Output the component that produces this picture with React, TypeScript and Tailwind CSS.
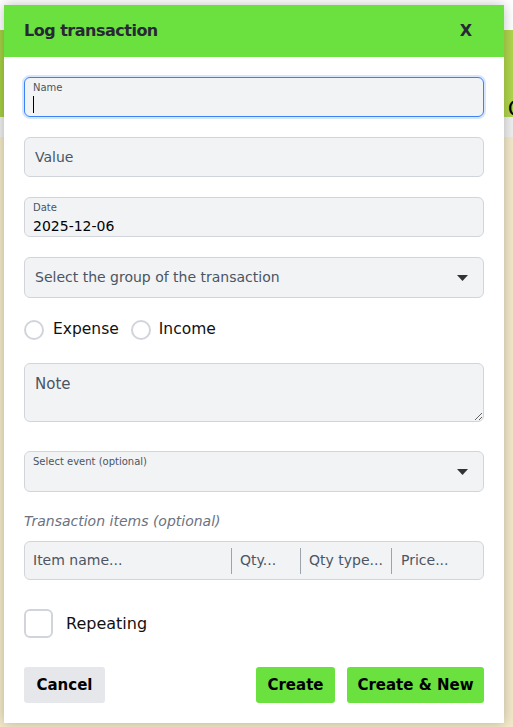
import { useState } from 'react';

const font = { fontFamily: '"DejaVu Sans", "Open Sans", sans-serif' };

const Caret = () => (
  <svg width="11" height="6" viewBox="0 0 11 6" className="shrink-0">
    <path d="M0 0 H11 L5.5 6 Z" fill="#333333" />
  </svg>
);

const App = () => {
  const [kind, setKind] = useState<'expense' | 'income' | null>(null);
  const [repeating, setRepeating] = useState(false);

  return (
    <div className="relative h-[727px] w-[513px] overflow-hidden bg-[#f4e9c9]" style={font}>
      {/* page behind the modal */}
      <div className="flex h-full flex-col">
        <div className="h-[30px] bg-white" />
        <div className="flex h-[87px] items-end justify-end bg-gradient-to-r from-[#a6cf45] to-[#b0d64c]">
          <span className="mb-[-4px] mr-[-10px] text-[22px] leading-[24px] text-black">C</span>
        </div>
        <div className="h-[20px] bg-[#efefef]" />
        <div className="flex-1 bg-[#f4e9c9]" />
      </div>

      {/* modal */}
      <div className="absolute left-[4px] top-[5px] w-[500px] bg-white shadow-[0_0_12px_rgba(0,0,0,0.25)]">
        <div className="flex h-[52px] items-center justify-between bg-[#6be13f] pl-5 pr-[32px]">
          <h2 className="text-[16px] font-bold tracking-[-0.5px] text-[#272735]">Log transaction</h2>
          <button className="text-[16px] font-bold text-[#272735]">X</button>
        </div>

        <div className="flex flex-col px-5 pb-5 pt-5">
          <div className="relative h-[40px] rounded-md border border-[#3b82f6] bg-[#f2f3f5] shadow-[0_0_0_2px_rgba(59,130,246,0.2)]">
            <span className="absolute left-[8px] top-[2px] text-[10px] text-[#4b5563]">Name</span>
            <span className="absolute left-[8px] top-[18px] h-[17px] w-px bg-black" />
          </div>

          <div className="mt-5 flex h-[40px] items-center rounded-md border border-[#d1d5db] bg-[#f2f3f5] px-[10px] text-[14px] text-[#4b5563]">
            Value
          </div>

          <div className="relative mt-5 h-[40px] rounded-md border border-[#d1d5db] bg-[#f2f3f5]">
            <span className="absolute left-[8px] top-[2px] text-[10px] text-[#4b5563]">Date</span>
            <span className="absolute left-[8px] top-[18px] text-[14px] text-black">2025-12-06</span>
          </div>

          <div className="mt-5 flex h-[41px] items-center justify-between rounded-md border border-[#d1d5db] bg-[#f2f3f5] pl-[10px] pr-[15px] text-[14px] text-[#4b5563]">
            <span>Select the group of the transaction</span>
            <Caret />
          </div>

          <div className="mt-[22px] flex h-[20px] items-center text-[15.5px] text-[#111111]">
            <button onClick={() => setKind('expense')} className="flex items-center">
              <span className="h-[20px] w-[20px] rounded-full border-2 border-[#d1d5db]">
                {kind === 'expense' && <span className="m-[3px] block h-[10px] w-[10px] rounded-full bg-[#6be13f]" />}
              </span>
              <span className="ml-[9px]">Expense</span>
            </button>
            <button onClick={() => setKind('income')} className="ml-[12px] flex items-center">
              <span className="h-[20px] w-[20px] rounded-full border-2 border-[#d1d5db]">
                {kind === 'income' && <span className="m-[3px] block h-[10px] w-[10px] rounded-full bg-[#6be13f]" />}
              </span>
              <span className="ml-[8px]">Income</span>
            </button>
          </div>

          <textarea
            placeholder="Note"
            className="mt-[23px] h-[59px] resize-y rounded-md border border-[#d1d5db] bg-[#f2f3f5] px-[10px] py-[9px] text-[15px] text-black outline-none placeholder:text-[#4b5563]"
          />

          <div className="relative mt-[29px] flex h-[41px] items-center justify-end rounded-md border border-[#d1d5db] bg-[#f2f3f5] pr-[15px]">
            <span className="absolute left-[8px] top-[2px] text-[10px] text-[#4b5563]">Select event (optional)</span>
            <Caret />
          </div>

          <p className="mt-[19px] h-[20px] text-[14px] italic leading-[20px] text-[#6b7280]">Transaction items (optional)</p>

          <div className="mt-[10px] flex h-[39px] items-center rounded-md border border-[#d1d5db] bg-[#f2f3f5] text-[14px] text-[#4b5563]">
            <span className="w-[206px] pl-[8px]">Item name...</span>
            <span className="h-[26px] w-px bg-[#9ca3af]" />
            <span className="w-[68px] pl-[8px]">Qty...</span>
            <span className="h-[26px] w-px bg-[#9ca3af]" />
            <span className="w-[90px] whitespace-nowrap pl-[8px]">Qty type...</span>
            <span className="h-[26px] w-px bg-[#9ca3af]" />
            <span className="flex-1 pl-[9px]">Price...</span>
          </div>

          <button onClick={() => setRepeating(!repeating)} className="mt-[29px] flex items-center text-[16px] text-[#111111]">
            <span className="flex h-[29px] w-[29px] items-center justify-center rounded-md border-2 border-[#d1d5db]">
              {repeating && <span className="h-[13px] w-[13px] rounded-sm bg-[#6be13f]" />}
            </span>
            <span className="ml-[13px]">Repeating</span>
          </button>

          <div className="mt-[29px] flex h-[36px] items-stretch">
            <button className="w-[81px] rounded-[3px] bg-[#e5e7eb] text-[15px] font-bold text-black">Cancel</button>
            <div className="flex-1" />
            <button className="w-[79px] rounded-[3px] bg-[#6be13f] text-[15px] font-bold text-black">Create</button>
            <button className="ml-[12px] w-[137px] rounded-[3px] bg-[#6be13f] text-[15px] font-bold text-black">Create &amp; New</button>
          </div>
        </div>
      </div>
    </div>
  );
};

export default App;
